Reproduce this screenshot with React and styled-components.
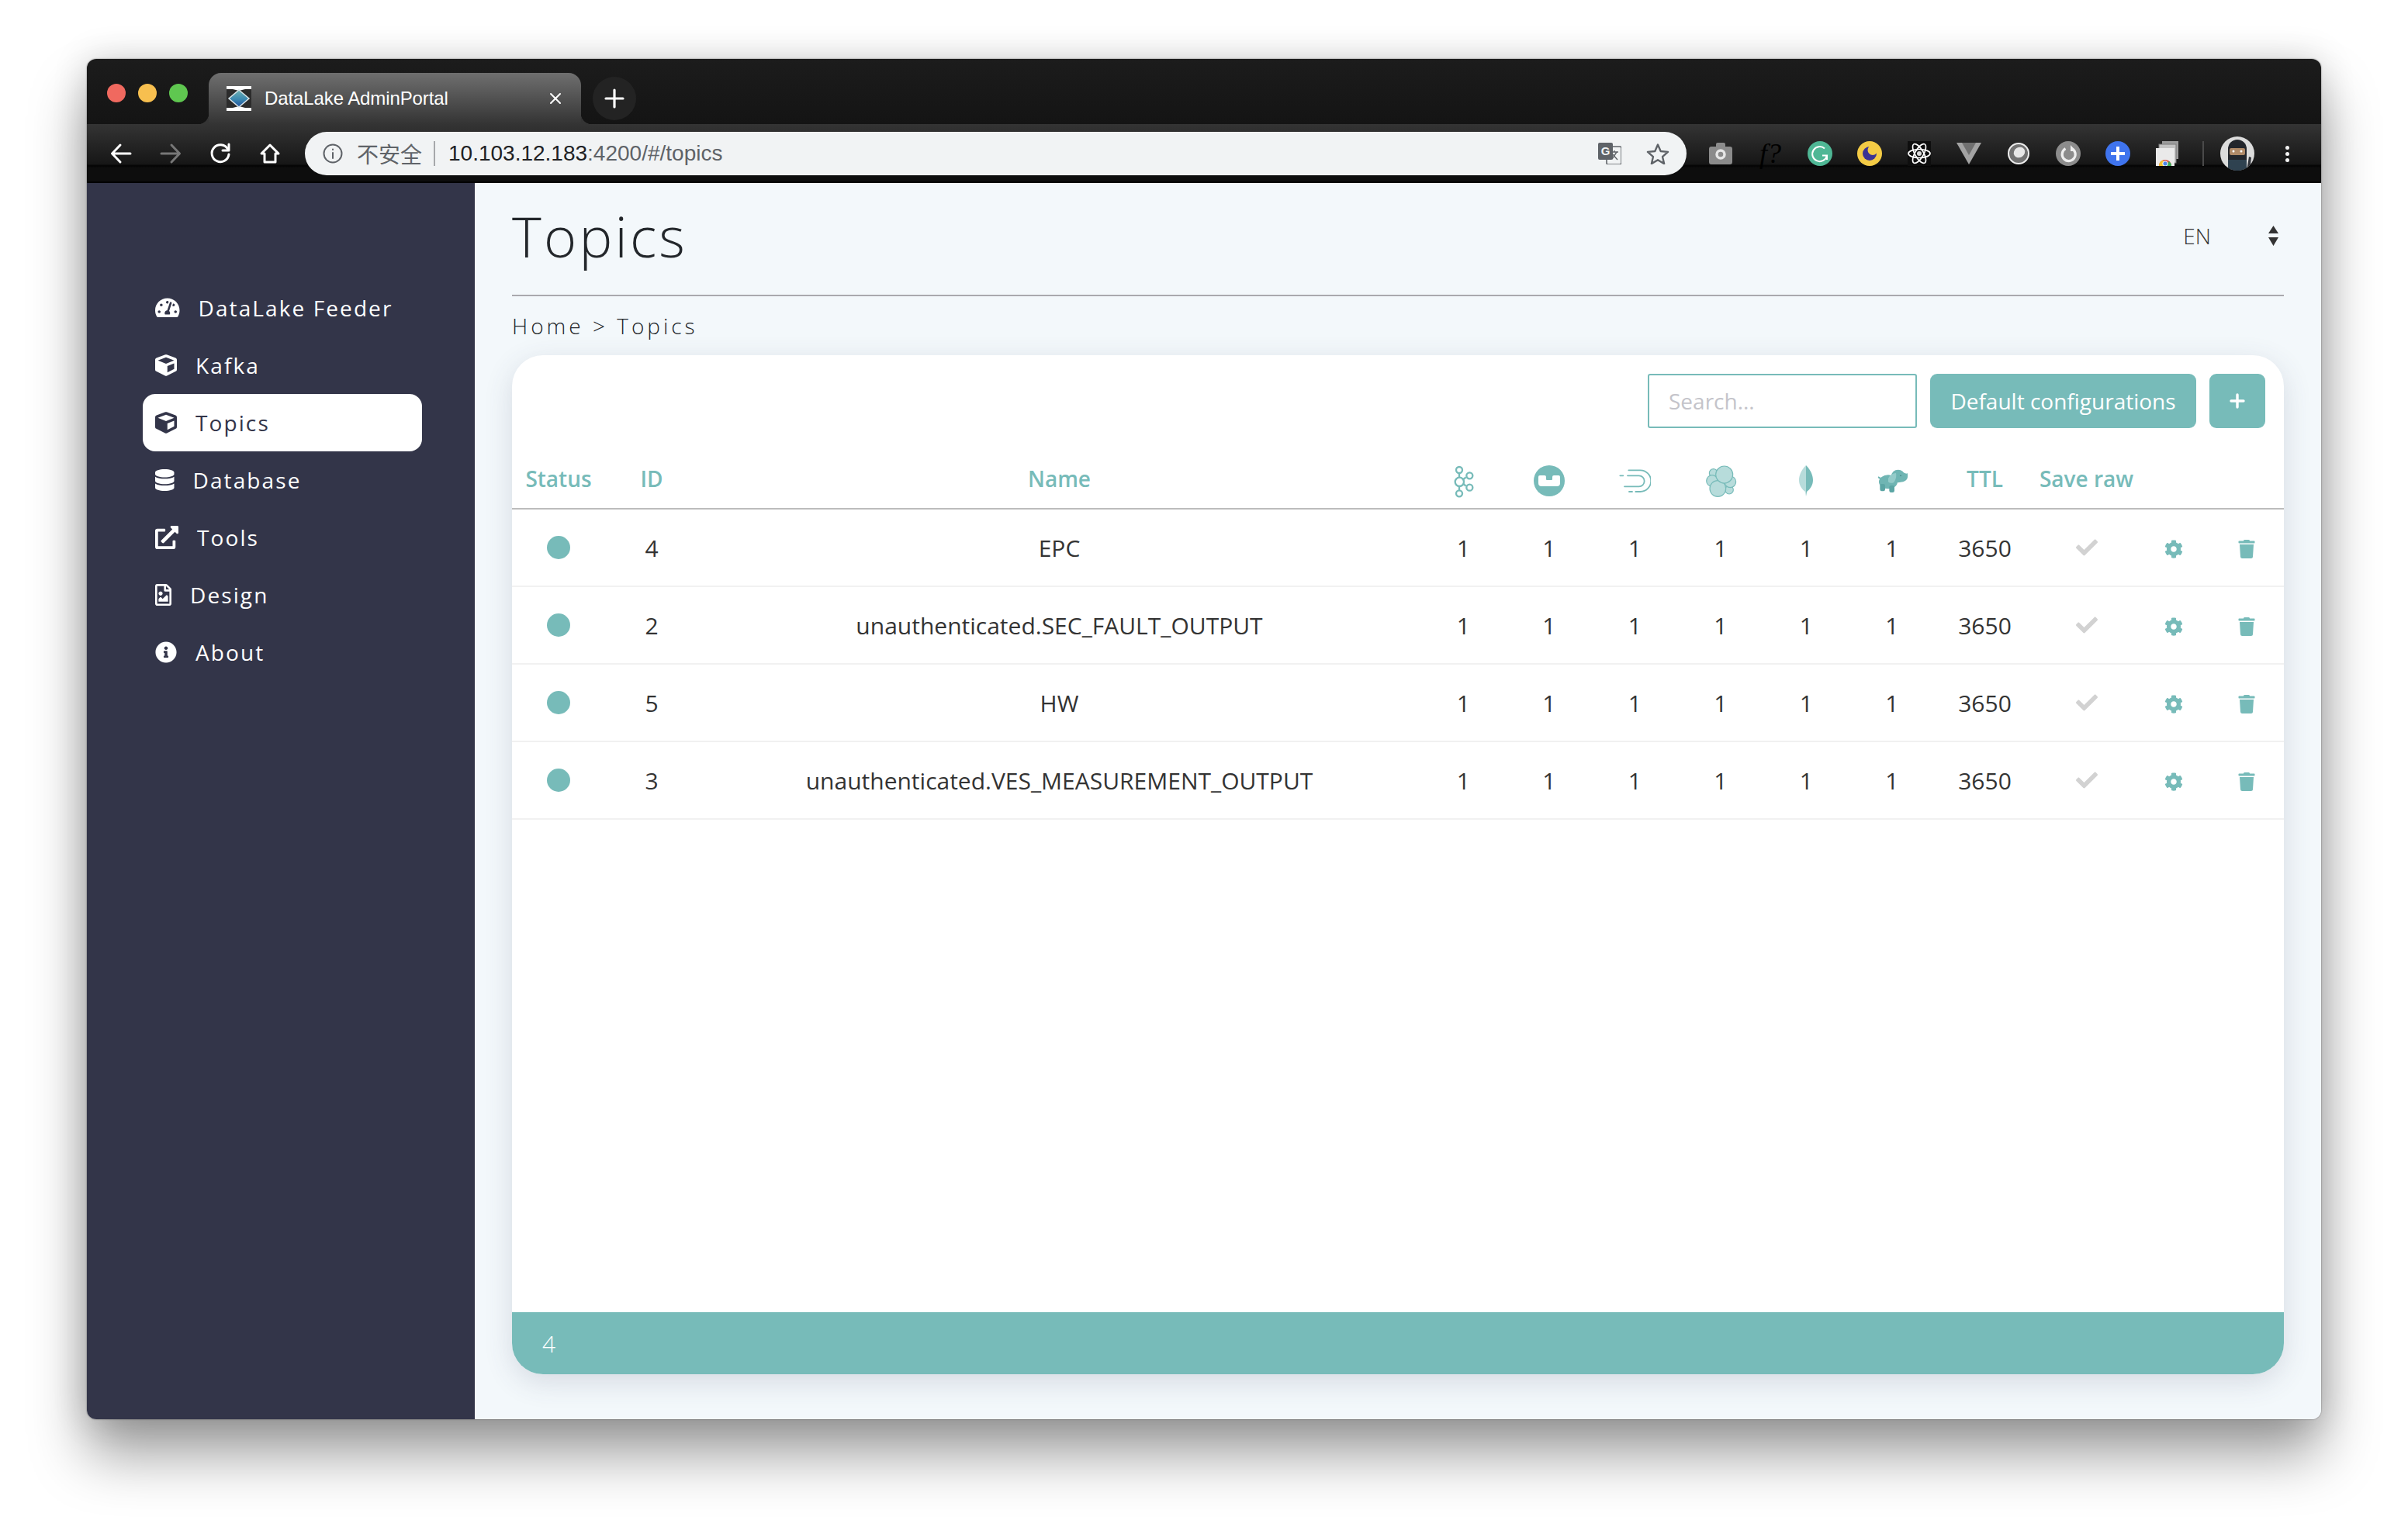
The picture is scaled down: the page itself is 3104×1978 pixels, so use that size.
import React from 'react';
import styled, { createGlobalStyle } from 'styled-components';
import {
  FaTachometerAlt, FaCube, FaDatabase, FaExternalLinkAlt, FaRegFileImage, FaInfoCircle,
  FaCheck, FaCog, FaTrash,
} from 'react-icons/fa';

const TEAL = '#77bbb9';
const PALE = '#b7dcdb';
const NAVY = '#333549';
const UI_FONT = '"Open Sans", "Liberation Sans", sans-serif';
const CHROME_FONT = '"Liberation Sans", "Noto Sans CJK SC", sans-serif';

const GlobalStyle = createGlobalStyle`
  html, body { margin: 0; padding: 0; background: #fff; }
  * { box-sizing: border-box; }
`;

const Page = styled.div`
  width: 3104px;
  height: 1978px;
  padding: 76px 112px 148px;
  background: #fff;
  overflow: hidden;
`;

const Win = styled.div`
  height: 100%;
  display: flex;
  flex-direction: column;
  border-radius: 12px;
  overflow: hidden;
`;

const WinShadow = styled.div`
  height: 100%;
  border-radius: 12px;
  box-shadow: 0 46px 72px rgba(0, 0, 0, 0.38), 0 0 46px rgba(0, 0, 0, 0.16), 0 0 2px rgba(0, 0, 0, 0.5);
`;

/* chrome: tab strip */
const TabStrip = styled.div`
  height: 84px;
  flex: none;
  display: flex;
  align-items: flex-end;
  padding-left: 26px;
  background: linear-gradient(#1c1c1c, #141414);
`;

const Lights = styled.div`
  display: flex;
  gap: 16px;
  align-self: flex-start;
  margin-top: 32px;
  margin-right: 27px;
`;

const Light = styled.span`
  width: 24px;
  height: 24px;
  border-radius: 50%;
  background: ${(p) => p.$color};
`;

const Tab = styled.div`
  position: relative;
  width: 480px;
  height: 66px;
  display: flex;
  align-items: center;
  padding: 0 25px 0 23px;
  border-radius: 16px 16px 0 0;
  background: linear-gradient(#6f6f6f, #343434);
  color: #fff;
  font: 24px ${CHROME_FONT};
  letter-spacing: -0.1px;
  &::before, &::after {
    content: '';
    position: absolute;
    bottom: 0;
    width: 14px;
    height: 14px;
  }
  &::before { left: -14px; background: radial-gradient(circle at 0 0, transparent 14px, #343434 14.5px); }
  &::after { right: -14px; background: radial-gradient(circle at 100% 0, transparent 14px, #343434 14.5px); }
`;

const TabTitle = styled.span`
  flex: 1;
  margin-left: 17px;
  white-space: nowrap;
`;

const NewTab = styled.div`
  width: 56px;
  height: 56px;
  margin: 23px 0 0 15px;
  align-self: flex-start;
  display: flex;
  align-items: center;
  justify-content: center;
  border-radius: 50%;
  background: #232323;
`;

/* chrome: toolbar */
const Toolbar = styled.div`
  height: 76px;
  flex: none;
  display: flex;
  align-items: flex-start;
  padding: 10px 36px 0 12px;
  background: linear-gradient(#343434 0, #161616 52px, #060606 53px, #060606 55px, #0d0d0d 56px, #0d0d0d 74px, #000 74px);
`;

const NavSlot = styled.div`
  width: 64px;
  height: 56px;
  flex: none;
  display: flex;
  align-items: center;
  justify-content: center;
`;

const AddressBar = styled.div`
  flex: 1;
  height: 56px;
  margin: 0 12px 0 13px;
  display: flex;
  align-items: center;
  padding: 0 22px 0 23px;
  border-radius: 28px;
  background: #f1f3f4;
  font: 28px ${CHROME_FONT};
  color: #5f6368;
  white-space: nowrap;
`;

const NotSecure = styled.span`
  margin-left: 18px;
  font-size: 28px;
`;

const BarDivider = styled.span`
  width: 2px;
  height: 32px;
  margin: 0 17px 0 15px;
  background: #a6a8ab;
`;

const Host = styled.span`
  color: #202124;
`;

const Path = styled.span`
  flex: 1;
`;

const BarIcons = styled.div`
  display: flex;
  align-items: center;
  gap: 32px;
`;

const ExtSlot = styled.div`
  width: 64px;
  height: 56px;
  flex: none;
  display: flex;
  align-items: center;
  justify-content: center;
`;

const FormulaMark = styled.span`
  font: italic 36px "Liberation Serif", serif;
  color: #000;
`;

const ToolDivider = styled.span`
  width: 2px;
  height: 32px;
  flex: none;
  margin: 12px 21px 0 13px;
  background: #4a4a4a;
`;

const Avatar = styled.div`
  width: 44px;
  height: 44px;
  flex: none;
  margin: 6px 34px 0 0;
  border-radius: 50%;
  overflow: hidden;
`;

const Dots = styled.div`
  width: 16px;
  height: 56px;
  flex: none;
  display: flex;
  flex-direction: column;
  align-items: center;
  justify-content: center;
  gap: 3px;
`;

const Dot = styled.span`
  width: 5px;
  height: 5px;
  border-radius: 50%;
  background: #f2f2f2;
`;

/* page */
const Body = styled.div`
  flex: 1;
  min-height: 0;
  display: flex;
  font-family: ${UI_FONT};
`;

const Sidebar = styled.nav`
  width: 500px;
  flex: none;
  padding: 124px 68px 0 72px;
  background: ${NAVY};
`;

const NavItem = styled.div`
  height: 74px;
  display: flex;
  align-items: center;
  gap: 24px;
  padding-left: 16px;
  border-radius: 16px;
  font-size: 28px;
  letter-spacing: 2.1px;
  color: ${(p) => (p.$active ? NAVY : '#fff')};
  background: ${(p) => (p.$active ? '#fff' : 'transparent')};
`;

const NavGlyph = styled.span`
  width: ${(p) => p.$width}px;
  flex: none;
  display: flex;
  justify-content: center;
`;

const Main = styled.main`
  flex: 1;
  min-width: 0;
  display: flex;
  flex-direction: column;
  padding: 0 48px 58px;
  background: #f3f8fb;
  color: #333;
`;

const Header = styled.header`
  height: 146px;
  flex: none;
  display: flex;
  align-items: center;
  justify-content: space-between;
  padding-bottom: 9px;
  border-bottom: 2px solid #a9a9ae;
`;

const Title = styled.h1`
  margin: 0;
  font-size: 72px;
  font-weight: 300;
  letter-spacing: 3.2px;
  color: #23272b;
`;

const LangSelect = styled.div`
  display: flex;
  align-items: center;
  gap: 74px;
  padding-right: 7px;
  font-size: 28px;
  font-weight: 300;
`;

const Crumbs = styled.div`
  height: 76px;
  flex: none;
  display: flex;
  align-items: center;
  font-size: 28px;
  font-weight: 300;
  letter-spacing: 4px;
  color: #23272b;
`;

const Card = styled.section`
  flex: 1;
  min-height: 0;
  display: flex;
  flex-direction: column;
  border-radius: 40px;
  background: #fff;
  box-shadow: 0 10px 36px rgba(60, 70, 100, 0.16);
  overflow: hidden;
`;

const CardTools = styled.div`
  flex: none;
  display: flex;
  justify-content: flex-end;
  gap: 17px;
  padding: 24px 24px 0;
`;

const SearchInput = styled.input`
  width: 347px;
  height: 70px;
  padding: 0 25px;
  border: 2px solid ${TEAL};
  border-radius: 3px;
  outline: none;
  background: #fff;
  font: 28px ${UI_FONT};
  color: #333;
  &::placeholder { color: #c4c4ca; opacity: 1; }
`;

const TealButton = styled.button`
  height: 70px;
  width: ${(p) => p.$width}px;
  padding: 0;
  display: flex;
  align-items: center;
  justify-content: center;
  border: none;
  border-radius: 9px;
  background: ${TEAL};
  color: #fff;
  font: 28px ${UI_FONT};
`;

const COLUMNS = '120px 120px 931px repeat(6, 110.5px) 129px 133px 92px 96px';

const HeadRow = styled.div`
  flex: none;
  display: grid;
  grid-template-columns: ${COLUMNS};
  align-items: center;
  height: 76px;
  margin-top: 29px;
  border-bottom: 2px solid #bcbcbc;
  font-size: 28px;
  font-weight: 600;
  color: ${TEAL};
`;

const HeadCell = styled.div`
  display: flex;
  justify-content: center;
  align-items: center;
  margin-top: ${(p) => (p.$icon ? '3px' : '0')};
  padding-bottom: ${(p) => (p.$icon ? '0' : '2px')};
`;

const Rows = styled.div`
  flex: 1;
  min-height: 0;
`;

const Row = styled.div`
  display: grid;
  grid-template-columns: ${COLUMNS};
  align-items: center;
  height: 100px;
  border-bottom: 2px solid #f1f1f1;
  font-size: 30px;
  color: #333;
`;

const Cell = styled.div`
  display: flex;
  justify-content: center;
  align-items: center;
  white-space: nowrap;
  color: ${(p) => p.$color || 'inherit'};
`;

const ActionCell = styled(Cell)`
  padding-top: 3px;
`;

const StatusDot = styled.span`
  width: 30px;
  height: 30px;
  border-radius: 50%;
  background: ${TEAL};
`;

const CardFooter = styled.footer`
  height: 80px;
  flex: none;
  display: flex;
  align-items: center;
  padding-left: 39px;
  background: ${TEAL};
  color: #fff;
  font-size: 30px;
  font-weight: 300;
`;

/* drawn icons */
const Favicon = () => (
  <svg width="32" height="32" viewBox="0 0 32 32">
    <defs>
      <linearGradient id="fav" x1="0" y1="0" x2="0" y2="1">
        <stop offset="0" stopColor="#6fb3b4" />
        <stop offset="0.55" stopColor="#3b88b0" />
        <stop offset="1" stopColor="#214f9c" />
      </linearGradient>
    </defs>
    <rect width="32" height="32" fill="#2c2c2c" />
    <rect width="32" height="4" fill="#fff" />
    <rect y="28" width="32" height="4" fill="#fff" />
    <path d="M8 4h16l-8 2zM8 28h16l-8-2z" fill="#fff" />
    <path d="M16 5 29 16 16 27 3 16Z" fill="url(#fav)" stroke="#d8e4e8" strokeWidth="1.5" />
  </svg>
);

const ChromeLine = ({ children, color = '#fff', w = 28, h = 28, sw = 3, box = '0 0 28 28' }) => (
  <svg width={w} height={h} viewBox={box} fill="none" stroke={color} strokeWidth={sw} strokeLinecap="round" strokeLinejoin="round">
    {children}
  </svg>
);

const ExtCamera = () => (
  <svg width="30" height="28" viewBox="0 0 30 28">
    <path d="M9 2q0-2 2-2h8q2 0 2 2v3h6a3 3 0 0 1 3 3v17a3 3 0 0 1-3 3H3a3 3 0 0 1-3-3V8a3 3 0 0 1 3-3h6z" fill="#8b8b8b" />
    <circle cx="15" cy="15" r="5" fill="none" stroke="#e6e6e6" strokeWidth="3.5" />
  </svg>
);

const ExtGrammar = () => (
  <svg width="32" height="32" viewBox="0 0 32 32">
    <circle cx="16" cy="16" r="16" fill="#4fb795" />
    <path d="M22 9.500A9.500 9.500 0 1 0 25 18.500h-6" fill="none" stroke="#fff" strokeWidth="2" />
    <path d="M25 18v6" stroke="#fff" strokeWidth="2" />
  </svg>
);

const ExtMoon = () => (
  <svg width="32" height="32" viewBox="0 0 32 32">
    <circle cx="16" cy="16" r="16" fill="#f4cb45" />
    <circle cx="16" cy="16" r="9" fill="#3b3393" />
    <circle cx="20" cy="11.500" r="6.500" fill="#f4cb45" />
  </svg>
);

const ExtReact = () => (
  <svg width="32" height="32" viewBox="-16 -16 32 32" fill="none" stroke="#fff" strokeWidth="1.7">
    <rect x="-15" y="-16" width="30" height="32" fill="#0e0e0e" stroke="none" />
    <ellipse rx="14" ry="5.500" />
    <ellipse rx="14" ry="5.500" transform="rotate(60)" />
    <ellipse rx="14" ry="5.500" transform="rotate(120)" />
    <circle r="3" fill="#ddd" stroke="none" />
  </svg>
);

const ExtVue = () => (
  <svg width="32" height="28" viewBox="0 0 32 28">
    <path d="M0 0h32L16 28Z" fill="#a3a3a3" />
    <path d="M7 0h18l-9 16Z" fill="#707070" />
  </svg>
);

const ExtDisc = () => (
  <svg width="28" height="28" viewBox="0 0 28 28">
    <circle cx="14" cy="14" r="13" fill="#737373" stroke="#eee" strokeWidth="2" />
    <ellipse cx="15" cy="12.500" rx="7.500" ry="6.500" fill="#e8e8e8" transform="rotate(-30 15 12.500)" />
  </svg>
);

const ExtReload = () => (
  <svg width="32" height="32" viewBox="0 0 32 32">
    <circle cx="16" cy="16" r="16" fill="#8c8c8c" />
    <path d="M20.500 9.500a8.500 8.500 0 1 1-8 .2" fill="none" stroke="#eee" strokeWidth="3.2" />
    <path d="M19 5v8h7z" fill="#eee" />
  </svg>
);

const ExtPlus = () => (
  <svg width="32" height="32" viewBox="0 0 32 32">
    <circle cx="16" cy="16" r="16" fill="#3f74ee" />
    <path d="M16 7v18M7 16h18" stroke="#fff" strokeWidth="4" />
  </svg>
);

const ExtChrome = () => (
  <svg width="30" height="32" viewBox="0 0 30 32">
    <rect x="8" y="0" width="21" height="23" fill="#9d9d9d" />
    <rect x="4" y="4" width="22" height="24" fill="#c4c4c4" stroke="#7a7a7a" strokeWidth="1" />
    <rect x="0" y="9" width="24" height="23" fill="#eaeaea" />
    <path d="M4 32a8 8 0 0 1 16 0z" fill="#e0483b" />
    <path d="M4 32a8 8 0 0 1 5-7.400L13 32z" fill="#f4c430" />
    <path d="M20 32a8 8 0 0 0-3-6.300L13 32z" fill="#3aa757" />
    <circle cx="12" cy="29" r="3.200" fill="#4a86e8" stroke="#fff" strokeWidth="1" />
  </svg>
);

const Ninja = () => (
  <svg width="44" height="44" viewBox="0 0 44 44">
    <rect width="44" height="44" fill="#dcdcdc" />
    <path d="M10 44V16a12 12 0 0 1 24 0v28z" fill="#23262c" />
    <rect x="12" y="15" width="20" height="9" rx="2" fill="#b08a68" />
    <circle cx="17" cy="19" r="1.500" fill="#fff" />
    <circle cx="27" cy="19" r="1.500" fill="#fff" />
    <path d="M10 30h24v14H10z" fill="#2f4250" />
    <path d="M34 44 37 26l3 1-2 17z" fill="#31343a" />
  </svg>
);

const Translate = () => (
  <svg width="30" height="28" viewBox="0 0 30 28">
    <rect x="11" y="5" width="19" height="23" rx="2" fill="#f1f3f4" stroke="#5f6368" strokeWidth="1.6" />
    <path d="M16 12h10M21 10v2M18 21l6-9M18 14l7 8" stroke="#5f6368" strokeWidth="1.4" fill="none" />
    <rect x="0" y="0" width="19" height="22" rx="2" fill="#5f6368" />
    <text x="9.500" y="16" textAnchor="middle" fontFamily="Liberation Sans, sans-serif" fontWeight="700" fontSize="15" fill="#f1f3f4">G</text>
  </svg>
);

const Star = () => (
  <svg width="30" height="28" viewBox="0 0 30 28">
    <path d="M15 2.500 18.700 11l9.300.9-7 6.200 2.100 9-8.100-4.800-8.100 4.800 2.100-9-7-6.200 9.300-.9Z" fill="none" stroke="#5f6368" strokeWidth="2.400" strokeLinejoin="round" />
  </svg>
);

const SelectArrows = () => (
  <svg width="13" height="26" viewBox="0 0 13 26">
    <path d="M6.500 0 13 10H0zM6.500 26 0 15h13z" fill="#333" />
  </svg>
);

const KafkaIcon = () => (
  <svg width="30" height="44" viewBox="90 50 90 132" fill="none" stroke={TEAL} strokeWidth="7">
    <path d="M120 88v16M120 136v16M136 110l10-8M136 128l10 8" />
    <circle cx="120" cy="74" r="12" />
    <circle cx="121" cy="120" r="17" />
    <circle cx="120" cy="165" r="12" />
    <circle cx="160" cy="96" r="12" />
    <circle cx="160" cy="142" r="12" />
  </svg>
);

const CouchbaseIcon = () => (
  <svg width="40" height="40" viewBox="-20 -20 40 40">
    <circle r="20" fill={TEAL} />
    <path d="M-14-5q0-2 2-2h6q2 0 2 2v3q0 1 1 1H3q1 0 1-1v-3q0-2 2-2h6q2 0 2 2V3q0 4-4 4H-10q-4 0-4-4z" fill="#fff" />
  </svg>
);

const DruidIcon = () => (
  <svg width="42" height="32" viewBox="740 70 126 96" fill="none" stroke={TEAL} strokeWidth="5.500" strokeLinecap="round">
    <path d="M780 77h45a41 41 0 0 1 0 83h-18" />
    <path d="M782 160h12" />
    <path d="M747 98h12" />
    <path d="M776 98h44a21 21 0 0 1 0 42h-56" />
  </svg>
);

const BlobsIcon = () => (
  <svg width="42" height="42" viewBox="1070 55 126 126" fill={PALE} stroke={TEAL} strokeWidth="3.500">
    <circle cx="1105" cy="88" r="16" />
    <circle cx="1166" cy="153" r="16" />
    <circle cx="1100" cy="118" r="22" />
    <circle cx="1170" cy="122" r="22" />
    <circle cx="1122" cy="148" r="31" />
    <circle cx="1147" cy="94" r="33" />
  </svg>
);

const LeafIcon = () => (
  <svg width="18" height="40" viewBox="0 0 18 40">
    <path d="M9 0C2 7 0 14 0 19c0 7 4 12 8 15l1 6z" fill={PALE} />
    <path d="M9 0c7 7 9 14 9 19 0 7-4 12-8 15l-1 6z" fill={TEAL} />
  </svg>
);

const ElephantIcon = () => (
  <svg width="42" height="32" viewBox="350 40 126 96" fill="#6fb5b3">
    <ellipse cx="398" cy="92" rx="36" ry="27" />
    <ellipse cx="436" cy="70" rx="26" ry="25" />
    <path d="M452 54q12 4 16 6l4-2q4 14-2 24-10 12-24 10z" />
    <rect x="366" y="100" width="20" height="28" rx="7" fill="#5ba5a4" />
    <rect x="402" y="106" width="20" height="27" rx="7" fill="#5ba5a4" />
    <path d="M366 82l-8-6 2-5 10 5z" />
    <path d="M398 78q12-20 30-20 4 18-8 36-14 6-22-2z" fill="#94cbc9" />
    <circle cx="446" cy="68" r="2.500" fill="#3f7f7e" />
  </svg>
);

const navItems = [
  { label: 'DataLake Feeder', Icon: FaTachometerAlt, size: 31.5, width: 31.5 },
  { label: 'Kafka', Icon: FaCube, size: 28, width: 28 },
  { label: 'Topics', Icon: FaCube, size: 28, width: 28, active: true },
  { label: 'Database', Icon: FaDatabase, size: 28, width: 24.5 },
  { label: 'Tools', Icon: FaExternalLinkAlt, size: 30, width: 30 },
  { label: 'Design', Icon: FaRegFileImage, size: 28, width: 21 },
  { label: 'About', Icon: FaInfoCircle, size: 28, width: 28 },
];

const topics = [
  { id: 4, name: 'EPC' },
  { id: 2, name: 'unauthenticated.SEC_FAULT_OUTPUT' },
  { id: 5, name: 'HW' },
  { id: 3, name: 'unauthenticated.VES_MEASUREMENT_OUTPUT' },
];

const counts = [0, 1, 2, 3, 4, 5];

const App = () => (
  <Page>
    <GlobalStyle />
    <WinShadow>
      <Win>
        <TabStrip>
          <Lights>
            <Light $color="#f0695f" />
            <Light $color="#f7bf4f" />
            <Light $color="#5fc750" />
          </Lights>
          <Tab>
            <Favicon />
            <TabTitle>DataLake AdminPortal</TabTitle>
            <ChromeLine w={16} h={16} box="0 0 16 16" sw={2}>
              <path d="M2 2l12 12M14 2 2 14" />
            </ChromeLine>
          </Tab>
          <NewTab>
            <ChromeLine w={26} h={26} box="0 0 26 26" sw={3.2}>
              <path d="M13 2v22M2 13h22" />
            </ChromeLine>
          </NewTab>
        </TabStrip>

        <Toolbar>
          <NavSlot>
            <ChromeLine><path d="M26 14H3M13 3 2.500 14 13 25" /></ChromeLine>
          </NavSlot>
          <NavSlot>
            <ChromeLine color="#777"><path d="M2 14h23M15 3l10.500 11L15 25" /></ChromeLine>
          </NavSlot>
          <NavSlot>
            <ChromeLine><path d="M23.500 8A11 11 0 1 0 25 15" /><path d="M25 2v8h-8" /></ChromeLine>
          </NavSlot>
          <NavSlot>
            <ChromeLine><path d="M14 3 3 14h4v11h14V14h4z" /></ChromeLine>
          </NavSlot>

          <AddressBar>
            <ChromeLine color="#5f6368" w={26} h={26} box="0 0 26 26" sw={2}>
              <circle cx="13" cy="13" r="11.500" />
              <path d="M13 12v7M13 7.500v.5" />
            </ChromeLine>
            <NotSecure>不安全</NotSecure>
            <BarDivider />
            <Host>10.103.12.183</Host>
            <Path>:4200/#/topics</Path>
            <BarIcons>
              <Translate />
              <Star />
            </BarIcons>
          </AddressBar>

          <ExtSlot><ExtCamera /></ExtSlot>
          <ExtSlot><FormulaMark>f?</FormulaMark></ExtSlot>
          <ExtSlot><ExtGrammar /></ExtSlot>
          <ExtSlot><ExtMoon /></ExtSlot>
          <ExtSlot><ExtReact /></ExtSlot>
          <ExtSlot><ExtVue /></ExtSlot>
          <ExtSlot><ExtDisc /></ExtSlot>
          <ExtSlot><ExtReload /></ExtSlot>
          <ExtSlot><ExtPlus /></ExtSlot>
          <ExtSlot><ExtChrome /></ExtSlot>
          <ToolDivider />
          <Avatar><Ninja /></Avatar>
          <Dots><Dot /><Dot /><Dot /></Dots>
        </Toolbar>

        <Body>
          <Sidebar>
            {navItems.map(({ label, Icon, size, width, active }) => (
              <NavItem key={label} $active={active}>
                <NavGlyph $width={width}><Icon size={size} /></NavGlyph>
                {label}
              </NavItem>
            ))}
          </Sidebar>

          <Main>
            <Header>
              <Title>Topics</Title>
              <LangSelect>
                EN
                <SelectArrows />
              </LangSelect>
            </Header>
            <Crumbs>Home &gt; Topics</Crumbs>

            <Card>
              <CardTools>
                <SearchInput placeholder="Search..." readOnly />
                <TealButton $width={343}>Default configurations</TealButton>
                <TealButton $width={72}>
                  <ChromeLine w={22} h={22} box="0 0 22 22" sw={3.4}>
                    <path d="M11 3v16M3 11h16" />
                  </ChromeLine>
                </TealButton>
              </CardTools>

              <HeadRow>
                <HeadCell>Status</HeadCell>
                <HeadCell>ID</HeadCell>
                <HeadCell>Name</HeadCell>
                <HeadCell $icon><KafkaIcon /></HeadCell>
                <HeadCell $icon><CouchbaseIcon /></HeadCell>
                <HeadCell $icon><DruidIcon /></HeadCell>
                <HeadCell $icon><BlobsIcon /></HeadCell>
                <HeadCell $icon><LeafIcon /></HeadCell>
                <HeadCell $icon><ElephantIcon /></HeadCell>
                <HeadCell>TTL</HeadCell>
                <HeadCell>Save raw</HeadCell>
                <HeadCell />
                <HeadCell />
              </HeadRow>

              <Rows>
                {topics.map((topic) => (
                  <Row key={topic.id}>
                    <Cell><StatusDot /></Cell>
                    <Cell>{topic.id}</Cell>
                    <Cell>{topic.name}</Cell>
                    {counts.map((c) => <Cell key={c}>1</Cell>)}
                    <Cell>3650</Cell>
                    <Cell $color="#d2d2d2"><FaCheck size={28} /></Cell>
                    <ActionCell $color={TEAL}><FaCog size={24} /></ActionCell>
                    <ActionCell $color={TEAL}><FaTrash size={24} /></ActionCell>
                  </Row>
                ))}
              </Rows>

              <CardFooter>4</CardFooter>
            </Card>
          </Main>
        </Body>
      </Win>
    </WinShadow>
  </Page>
);

export default App;
